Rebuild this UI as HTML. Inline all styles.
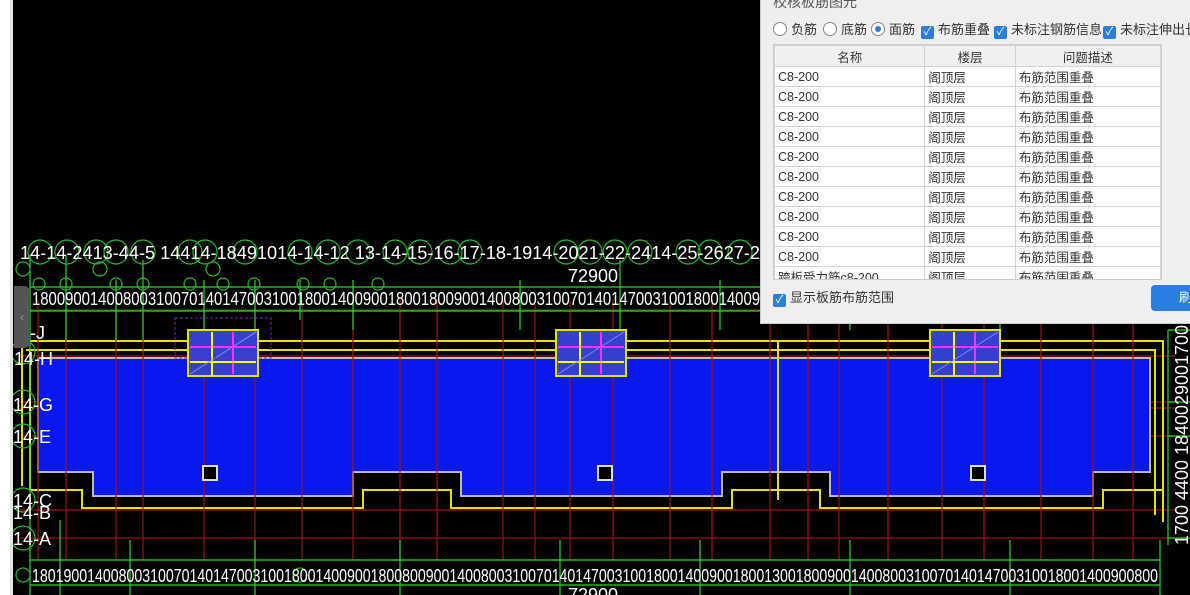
<!DOCTYPE html>
<html><head><meta charset="utf-8"><style>
html,body{margin:0;padding:0;width:1190px;height:595px;overflow:hidden;background:#000;font-family:"Liberation Sans","Noto Sans CJK SC",sans-serif}
#left{position:absolute;left:0;top:0;width:10px;height:595px;background:#fff;border-right:3px solid #e4e4e4}
#handle{position:absolute;left:14px;top:286px;width:16px;height:62px;background:#555;border-radius:0 6px 6px 0;color:#999;font-size:12px;line-height:62px;text-align:center}
svg{position:absolute;left:0;top:0}
#panel{position:absolute;left:760px;top:0;width:430px;height:323px;background:#efefef;border-left:1px solid #ccc;border-bottom:1px solid #ccc;font-size:13px;color:#333}
.opt{position:absolute;top:21px;height:18px;line-height:18px;white-space:nowrap}
.rad{display:inline-block;width:12px;height:12px;border:1px solid #888;border-radius:50%;background:#fff;vertical-align:-2px;margin-right:4px;position:relative}
.rad.on:after{content:"";position:absolute;left:3px;top:3px;width:6px;height:6px;border-radius:50%;background:#2a7de1}
.chk{display:inline-block;width:13px;height:13px;background:#2a7de1;border-radius:2px;vertical-align:-1px;margin-right:4px;color:#fff;font-size:11px;line-height:13px;text-align:center}
table{border-collapse:collapse;background:#fff;font-size:12.5px}
td,th{border:1px solid #d4d4d4;height:19px;padding:0 3px;font-weight:normal;text-align:left;white-space:nowrap}
th{background:#f0f0f0;text-align:center;height:20px}
#tw{position:absolute;left:12px;top:44px;width:387px;height:234px;overflow:hidden;border:1px solid #ccc;background:#fff}
</style></head><body>
<svg width="1190" height="595" viewBox="0 0 1190 595">
<rect x="14" y="0" width="1176" height="595" fill="#000"/>
<g stroke="#a01010" stroke-width="1.3">
<line x1="20" y1="310" x2="1175" y2="310"/><line x1="20" y1="356" x2="1175" y2="356"/><line x1="20" y1="402" x2="1175" y2="402"/><line x1="20" y1="408" x2="1175" y2="408"/><line x1="20" y1="436" x2="1175" y2="436"/><line x1="20" y1="510" x2="1175" y2="510"/><line x1="20" y1="538" x2="1175" y2="538"/>
</g>
<path d="M38 358H1150V472H1093V496H830V472H722V496H461V472H353V496H93V472H38Z" fill="#0a18f0" stroke="#bbb" stroke-width="2"/>
<g fill="none" stroke="#e8e000" stroke-width="2">
<path d="M26 341H1163V522"/><path d="M26 350H1155V515"/>
<path d="M30 350V490H82L82 508H363V490H451V508H732V490H820V508H1103V490H1163"/>
<path d="M22 345V486"/>
<line x1="778" y1="341" x2="778" y2="500"/>
</g>
<g stroke="#a01010" stroke-width="1.2">
<line x1="38" y1="300" x2="38" y2="560"/><line x1="66" y1="300" x2="66" y2="560"/><line x1="116" y1="300" x2="116" y2="560"/><line x1="143" y1="300" x2="143" y2="560"/><line x1="204" y1="300" x2="204" y2="560"/><line x1="255" y1="300" x2="255" y2="560"/><line x1="302" y1="300" x2="302" y2="560"/><line x1="353" y1="300" x2="353" y2="560"/><line x1="400" y1="300" x2="400" y2="560"/><line x1="437" y1="300" x2="437" y2="560"/><line x1="503" y1="300" x2="503" y2="560"/><line x1="535" y1="300" x2="535" y2="560"/><line x1="570" y1="300" x2="570" y2="560"/><line x1="613" y1="300" x2="613" y2="560"/><line x1="670" y1="300" x2="670" y2="560"/><line x1="712" y1="300" x2="712" y2="560"/><line x1="770" y1="300" x2="770" y2="560"/><line x1="808" y1="300" x2="808" y2="560"/><line x1="839" y1="300" x2="839" y2="560"/><line x1="888" y1="300" x2="888" y2="560"/><line x1="942" y1="300" x2="942" y2="560"/><line x1="984" y1="300" x2="984" y2="560"/><line x1="1041" y1="300" x2="1041" y2="560"/><line x1="1093" y1="300" x2="1093" y2="560"/><line x1="1133" y1="300" x2="1133" y2="560"/>
</g>
<g stroke="#22dd22" stroke-width="1.2">
<line x1="30" y1="255" x2="30" y2="595"/><line x1="66" y1="255" x2="66" y2="340"/><line x1="116" y1="280" x2="116" y2="340"/><line x1="143" y1="260" x2="143" y2="340"/><line x1="204" y1="280" x2="204" y2="330"/><line x1="255" y1="280" x2="255" y2="330"/><line x1="300" y1="280" x2="300" y2="320"/><line x1="353" y1="280" x2="353" y2="330"/><line x1="520" y1="280" x2="520" y2="330"/><line x1="620" y1="260" x2="620" y2="330"/><line x1="720" y1="280" x2="720" y2="330"/><line x1="850" y1="280" x2="850" y2="330"/><line x1="1000" y1="280" x2="1000" y2="330"/>
<line x1="60" y1="520" x2="60" y2="595"/><line x1="130" y1="540" x2="130" y2="595"/><line x1="255" y1="540" x2="255" y2="595"/><line x1="400" y1="540" x2="400" y2="595"/><line x1="560" y1="540" x2="560" y2="595"/><line x1="700" y1="540" x2="700" y2="595"/><line x1="850" y1="540" x2="850" y2="595"/><line x1="1010" y1="540" x2="1010" y2="595"/><line x1="1160" y1="540" x2="1160" y2="595"/>
<line x1="30" y1="287" x2="760" y2="287"/><line x1="30" y1="311" x2="760" y2="311"/><line x1="30" y1="560" x2="1160" y2="560"/><line x1="30" y1="585" x2="1160" y2="585"/>
<line x1="1168" y1="330" x2="1190" y2="330"/><line x1="1168" y1="402" x2="1190" y2="402"/><line x1="1168" y1="436" x2="1190" y2="436"/><line x1="1168" y1="538" x2="1190" y2="538"/>
<line x1="1168" y1="330" x2="1168" y2="545"/>
</g>
<g fill="none" stroke="#22bb22" stroke-width="1.2">
<circle cx="40" cy="252" r="12"/><circle cx="67" cy="252" r="12"/><circle cx="96" cy="252" r="12"/><circle cx="116" cy="252" r="12"/><circle cx="143" cy="252" r="12"/><circle cx="190" cy="252" r="12"/><circle cx="205" cy="252" r="12"/><circle cx="245" cy="252" r="12"/><circle cx="300" cy="252" r="12"/><circle cx="328" cy="252" r="12"/><circle cx="358" cy="252" r="12"/><circle cx="395" cy="252" r="12"/><circle cx="420" cy="252" r="12"/><circle cx="450" cy="252" r="12"/><circle cx="470" cy="252" r="12"/><circle cx="566" cy="252" r="12"/><circle cx="590" cy="252" r="12"/><circle cx="615" cy="252" r="12"/><circle cx="640" cy="252" r="12"/><circle cx="688" cy="252" r="12"/><circle cx="710" cy="252" r="12"/><circle cx="740" cy="252" r="12"/>
<circle cx="23" cy="269" r="7"/><circle cx="100" cy="269" r="7"/><circle cx="213" cy="269" r="7"/><circle cx="39" cy="284" r="6"/><circle cx="66" cy="284" r="6"/><circle cx="116" cy="284" r="6"/><circle cx="143" cy="284" r="6"/><circle cx="190" cy="284" r="6"/><circle cx="223" cy="284" r="6"/><circle cx="254" cy="284" r="6"/><circle cx="303" cy="284" r="6"/><circle cx="330" cy="284" r="6"/><circle cx="378" cy="284" r="6"/><circle cx="23" cy="575" r="7"/><circle cx="300" cy="575" r="7"/>
<circle cx="23" cy="352" r="12"/><circle cx="23" cy="402" r="12"/><circle cx="23" cy="436" r="12"/><circle cx="23" cy="500" r="12"/><circle cx="23" cy="538" r="12"/>
</g>
<g>
<rect x="188" y="330" width="70" height="46" fill="#3340d0" stroke="#e8e000" stroke-width="2"/>
<rect x="556" y="330" width="70" height="46" fill="#3340d0" stroke="#e8e000" stroke-width="2"/>
<rect x="930" y="330" width="70" height="46" fill="#3340d0" stroke="#e8e000" stroke-width="2"/>
<g stroke="#ff30ff" stroke-width="2"><line x1="190" y1="347" x2="256" y2="347"/><line x1="558" y1="347" x2="624" y2="347"/><line x1="932" y1="347" x2="998" y2="347"/><line x1="233" y1="332" x2="233" y2="374"/><line x1="601" y1="332" x2="601" y2="374"/><line x1="975" y1="332" x2="975" y2="374"/></g>
<g stroke="#ffff00" stroke-width="2"><line x1="190" y1="362" x2="256" y2="362"/><line x1="558" y1="362" x2="624" y2="362"/><line x1="932" y1="362" x2="998" y2="362"/><line x1="212" y1="332" x2="212" y2="376"/><line x1="580" y1="332" x2="580" y2="376"/><line x1="954" y1="332" x2="954" y2="376"/></g>
<g stroke="#8888ee" stroke-width="1"><line x1="190" y1="374" x2="256" y2="332"/><line x1="558" y1="374" x2="624" y2="332"/><line x1="932" y1="374" x2="998" y2="332"/></g>
<rect x="175" y="318" width="96" height="40" fill="none" stroke="#8020c0" stroke-dasharray="3 2"/>
<rect x="203" y="466" width="14" height="14" fill="#000" stroke="#ddc" stroke-width="2"/>
<rect x="598" y="466" width="14" height="14" fill="#000" stroke="#ddc" stroke-width="2"/>
<rect x="971" y="466" width="14" height="14" fill="#000" stroke="#ddc" stroke-width="2"/>
</g>
<g fill="#fff" font-family="Liberation Sans, sans-serif" font-size="18">
<text x="20" y="259" textLength="740" lengthAdjust="spacingAndGlyphs">14-14-2413-44-5  14414-18491014-14-12 13-14-15-16-17-18-1914-2021-22-2414-25-2627-2</text>
<text x="568" y="282">72900</text>
<text x="32" y="305" textLength="728" lengthAdjust="spacingAndGlyphs">1800900140080031007014014700310018001400900180018009001400800310070140147003100180014009</text>
<text x="32" y="582" textLength="1126" lengthAdjust="spacingAndGlyphs">18019001400800310070140147003100180014009001800800900140080031007014014700310018001400900180013001800900140080031007014014700310018001400900800</text>
<text x="568" y="601">72900</text>
<text x="30" y="339">-J</text><text x="14" y="365">14-H</text><text x="13" y="411">14-G</text><text x="13" y="443">14-E</text><text x="13" y="507">14-C</text><text x="13" y="519">14-B</text><text x="13" y="545">14-A</text>
<text transform="translate(1188,545) rotate(-90)" textLength="220" lengthAdjust="spacingAndGlyphs">1700 4400 1840029001700</text>
</g>
</svg>
<div id="left"></div>
<div id="handle">‹</div>
<div id="panel">
<div style="position:absolute;left:12px;top:-8px;font-size:14px;color:#555">校核板筋图元</div>
<div class="opt" style="left:12px"><span class="rad"></span>负筋</div>
<div class="opt" style="left:62px"><span class="rad"></span>底筋</div>
<div class="opt" style="left:110px"><span class="rad on"></span>面筋</div>
<div class="opt" style="left:160px"><span class="chk">✓</span>布筋重叠</div>
<div class="opt" style="left:233px"><span class="chk">✓</span>未标注钢筋信息</div>
<div class="opt" style="left:342px"><span class="chk">✓</span>未标注伸出长度</div>
<div id="tw"><table>
<tr><th style="width:144px">名称</th><th style="width:84px">楼层</th><th style="width:139px">问题描述</th></tr>
<tr><td>C8-200</td><td>阁顶层</td><td>布筋范围重叠</td></tr>
<tr><td>C8-200</td><td>阁顶层</td><td>布筋范围重叠</td></tr>
<tr><td>C8-200</td><td>阁顶层</td><td>布筋范围重叠</td></tr>
<tr><td>C8-200</td><td>阁顶层</td><td>布筋范围重叠</td></tr>
<tr><td>C8-200</td><td>阁顶层</td><td>布筋范围重叠</td></tr>
<tr><td>C8-200</td><td>阁顶层</td><td>布筋范围重叠</td></tr>
<tr><td>C8-200</td><td>阁顶层</td><td>布筋范围重叠</td></tr>
<tr><td>C8-200</td><td>阁顶层</td><td>布筋范围重叠</td></tr>
<tr><td>C8-200</td><td>阁顶层</td><td>布筋范围重叠</td></tr>
<tr><td>C8-200</td><td>阁顶层</td><td>布筋范围重叠</td></tr>
<tr><td>跨板受力筋c8-200</td><td>阁顶层</td><td>布筋范围重叠</td></tr>
</table></div>
<div class="opt" style="left:12px;top:289px"><span class="chk">✓</span>显示板筋布筋范围</div>
<div style="position:absolute;left:390px;top:285px;width:50px;height:26px;background:#2a7de1;border-radius:4px;color:#fff;line-height:26px;padding-left:28px">刷</div>
</div>
</body></html>
